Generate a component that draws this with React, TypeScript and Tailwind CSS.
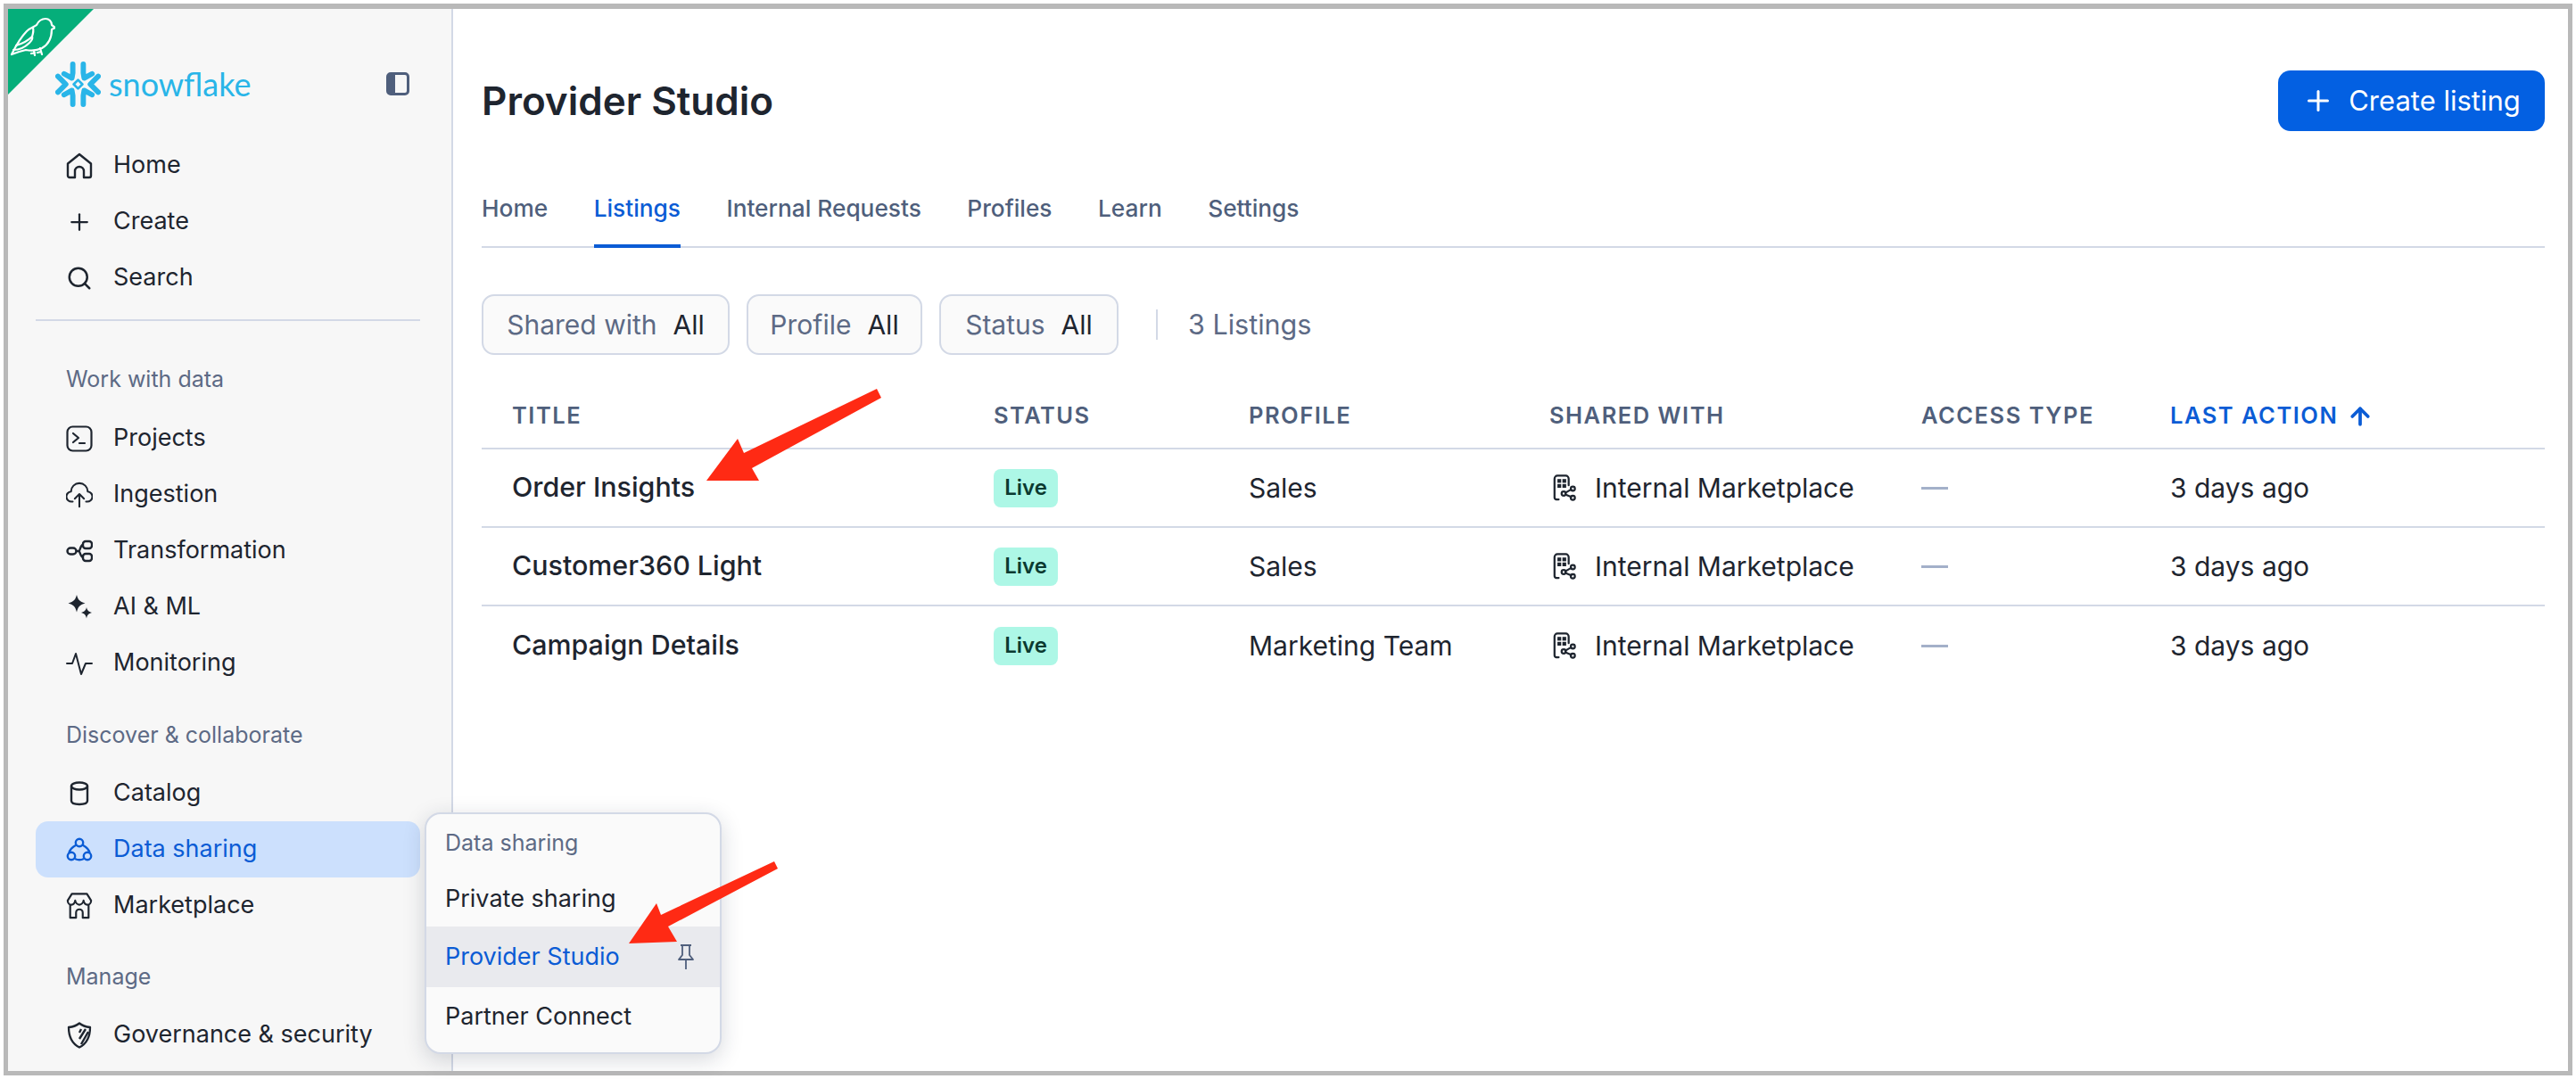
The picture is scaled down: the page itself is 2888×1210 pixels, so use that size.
import { Plus, Search, ArrowUp } from "lucide-react";
import type { ReactNode } from "react";

const HomeIcon = () => (
  <svg viewBox="0 0 30 30" className="w-[30px] h-[30px]" fill="none" stroke="currentColor" strokeWidth={2.4} strokeLinejoin="round">
    <path d="M2 12.500 15 2l13 10.500V26a2 2 0 0 1-2 2h-6v-7a5 5 0 0 0-10 0v7H4a2 2 0 0 1-2-2z" />
  </svg>
);
const TerminalIcon = () => (
  <svg viewBox="0 0 30 30" className="w-[30px] h-[30px]" fill="none" stroke="currentColor" strokeWidth={2.2} strokeLinecap="round" strokeLinejoin="round">
    <rect x="1.500" y="1.500" width="27" height="27" rx="6" />
    <path d="m8 9 6 5-6 5M15 20h6" />
  </svg>
);
const CloudIcon = () => (
  <svg viewBox="0 0 32 32" className="w-[32px] h-[32px]" fill="none" stroke="currentColor" strokeWidth={2.2} strokeLinecap="round" strokeLinejoin="round">
    <path d="M8 24H7a6 6 0 0 1-1-12 10 10 0 0 1 20 0 6 6 0 0 1-1 12h-1" />
    <path d="M16 30V15M10.500 20.500 16 15l5.500 5.500" />
  </svg>
);
const FlowIcon = () => (
  <svg viewBox="0 0 30 30" className="w-[30px] h-[30px]" fill="none" stroke="currentColor" strokeWidth={2.4}>
    <rect x="1.500" y="11.500" width="10" height="7" rx="3.500" />
    <rect x="19" y="4" width="10" height="8" rx="3" />
    <rect x="19" y="18" width="10" height="8" rx="3" />
    <path d="M11.500 15h2.500c2 0 2-7 5-7M14 15c2 0 2 7 5 7" />
  </svg>
);
const SparkIcon = () => (
  <svg viewBox="0 0 30 30" className="w-[30px] h-[30px]" fill="currentColor">
    <path d="M12 1c1.500 5.500 3 7.500 9.500 9.500-6.500 2-8 4-9.500 10-1.500-6-3-8-9.500-10C9 8.500 10.500 6.500 12 1z" />
    <path d="M23 15c.8 3.500 2 4.800 6 6-4 1.200-5.200 2.500-6 6.500-.8-4-2-5.300-6-6.500 4-1.200 5.200-2.500 6-6z" />
  </svg>
);
const PulseIcon = () => (
  <svg viewBox="0 0 30 30" className="w-[30px] h-[30px]" fill="none" stroke="currentColor" strokeWidth={2} strokeLinecap="round" strokeLinejoin="round">
    <path d="M1 15h6l4-11 6 23 5-12h7" />
  </svg>
);
const CylinderIcon = () => (
  <svg viewBox="0 0 30 30" className="w-[30px] h-[30px]" fill="none" stroke="currentColor" strokeWidth={2.4}>
    <ellipse cx="15" cy="6.500" rx="9" ry="4" />
    <path d="M6 6.500V23c0 2.500 4 4 9 4s9-1.500 9-4V6.500" />
  </svg>
);
const ShareCircleIcon = () => (
  <svg viewBox="0 0 30 30" className="w-[30px] h-[30px]" fill="none" stroke="currentColor" strokeWidth={2.4}>
    <circle cx="15" cy="7" r="4.200" />
    <circle cx="6" cy="22" r="4.200" />
    <circle cx="24" cy="22" r="4.200" />
    <path d="M11.500 9.500C7 12 4 14.500 3.500 18.500M18.500 9.500c4.500 2.500 7.500 5 8 9M10 25c3 1.600 7 1.600 10 0" />
  </svg>
);
const StoreIcon = () => (
  <svg viewBox="0 0 32 32" className="w-[32px] h-[32px]" fill="none" stroke="currentColor" strokeWidth={2.3} strokeLinejoin="round">
    <path d="M7 1.500h18l5 8c0 3-2 5-4.500 5S21.500 12 21 9.500c-.5 2.500-2.500 5-5 5s-4.500-2.500-5-5c-.5 2.500-2 5-4.500 5S2 12.500 2 9.500z" />
    <path d="M5 14.500V30h7v-6a4 4 0 0 1 8 0v6h7V14.500" />
  </svg>
);
const ShieldIcon = () => (
  <svg viewBox="0 0 30 30" className="w-[30px] h-[30px]" fill="none" stroke="currentColor" strokeWidth={2.3} strokeLinejoin="round">
    <path d="M15 1.500c3 2.500 7 4 12 4.500 0 10-3 18-12 22.500C6 24 3 16 3 6c5-.5 9-2 12-4.500z" />
    <path d="M17 8l-2 4M22 8l-7 11M25 11l-8 14" strokeWidth={2.4} />
  </svg>
);
const PinIcon = () => (
  <svg viewBox="0 0 24 30" className="w-[24px] h-[30px]" fill="none" stroke="currentColor" strokeWidth={1.800} strokeLinejoin="round">
    <path d="M6 2h12M8 2v11l-4 5h16l-4-5V2M12 18v11" />
  </svg>
);
const BuildingShareIcon = () => (
  <svg viewBox="0 0 30 32" className="w-[28px] h-[32px] shrink-0" fill="none" stroke="currentColor" strokeWidth={2.4} strokeLinecap="round">
    <path d="M8 30H5a2.500 2.500 0 0 1-2-2.500V5a3.500 3.500 0 0 1 3.500-3.500h10A3.500 3.500 0 0 1 20 5v8" />
    <rect x="6.500" y="5.500" width="4.500" height="4.500" fill="currentColor" stroke="none" />
    <rect x="12.500" y="5.500" width="4.500" height="4.500" fill="currentColor" stroke="none" />
    <rect x="6.500" y="11.500" width="4.500" height="4.500" fill="currentColor" stroke="none" />
    <rect x="12.500" y="11.500" width="4.500" height="4.500" fill="currentColor" stroke="none" />
    <circle cx="14" cy="23" r="2.500" />
    <circle cx="25" cy="17" r="2.500" />
    <circle cx="25" cy="28" r="2.500" />
    <path d="m16 22 7-4M16 24l7 3" />
  </svg>
);
const BirdIcon = () => (
  <svg viewBox="0 0 52 44" className="w-[52px] h-[44px]" fill="none" stroke="#fff" strokeWidth={2.200} strokeLinecap="round" strokeLinejoin="round">
    <path d="M3 42C7 34 12 24 20 16c4-4 9-5 11-7 2-4 6-7 10-7s7 3 7 7l4 3-4 2c0 9-4 17-11 21-6 3-12 3-18 2-5 1-11 3-16 5z" />
    <path d="M8 32c7-2 13-5 18-10 1-3 2-6 1-10M5 37c6 0 13-3 18-8 3-3 4-5 3-7" />
    <path d="M28 38l1 5M35 35l2 7M29 40l-4 1M36 39l-4 1" />
  </svg>
);
const SnowflakeLogo = () => (
  <svg viewBox="0 0 52 52" className="w-[51px] h-[51px]" fill="none" stroke="#29b5e8" strokeWidth={6} strokeLinecap="round" strokeLinejoin="round">
    <path d="M20 3v10l-1 6-9-5M32 3v10l1 6 9-5" />
    <path d="M20 49V39l-1-6-9 5M32 49V39l1-6 9 5" />
    <path d="M3 17l9 9-9 9M49 17l-9 9 9 9" />
    <path d="M26 21l5 5-5 5-5-5z" strokeWidth={2.800} />
  </svg>
);

const NavItem = ({ icon, label, active }: { icon: ReactNode; label: string; active?: boolean }) => (
  <div className={`h-[63px] flex items-center pl-[34px] rounded-[14px] text-[27px] ${active ? "bg-[#cce0fd] text-[#0b5cd5]" : "text-[#1e252f]"}`}>
    <span className="w-[30px] flex justify-center shrink-0">{icon}</span>
    <span className="ml-[23px]">{label}</span>
  </div>
);

const SectionLabel = ({ children, className }: { children: ReactNode; className: string }) => (
  <div className={`pl-[34px] h-[40px] flex items-center text-[25px] text-[#5d6a85] ${className}`}>{children}</div>
);

const Filter = ({ label, width }: { label: string; width: string }) => (
  <div className={`${width} h-[68px] flex items-center justify-center gap-[18px] rounded-[14px] border-2 border-[#d3d9e6] bg-[#fafafa] text-[30px]`}>
    <span className="text-[#5d6a85]">{label}</span>
    <span className="text-[#1e252f]">All</span>
  </div>
);

const cols = "grid grid-cols-[540px_286px_337px_417px_279px_1fr] pl-[34px] items-center";

const rows = [
  { title: "Order Insights", profile: "Sales" },
  { title: "Customer360 Light", profile: "Sales" },
  { title: "Campaign Details", profile: "Marketing Team" },
];

const tabs = ["Home", "Listings", "Internal Requests", "Profiles", "Learn", "Settings"];

export default function App() {
  return (
    <div className="relative w-[2888px] h-[1210px] bg-white p-[4px] overflow-hidden font-['Inter',sans-serif]">
      <div className="w-full h-full border-[5px] border-[#b9b9b9] border-t-[6px] flex overflow-hidden">
        <aside className="relative w-[499px] shrink-0 bg-[#f7f7f7] border-r-2 border-[#d3d9e6] pl-[31px] pr-[35px] overflow-hidden">
          <div className="absolute left-0 top-0 w-0 h-0 border-t-[96px] border-r-[96px] border-t-[#05ae7a] border-r-transparent" />
          <div className="absolute left-[1px] top-[9px]">
            <BirdIcon />
          </div>
          <div className="h-[144px] flex items-center pl-[22px] pr-[12px] pt-[24px]">
            <SnowflakeLogo />
            <span className="ml-[9px] text-[36px] leading-none text-[#29b5e8] font-['Lato',sans-serif]">snowflake</span>
            <div className="ml-auto w-[26px] h-[26px] rounded-[5px] border-[3px] border-[#4f5f7c] flex">
              <div className="w-[7px] bg-[#4f5f7c]" />
            </div>
          </div>
          <NavItem icon={<HomeIcon />} label="Home" />
          <NavItem icon={<Plus size={30} strokeWidth={1.8} />} label="Create" />
          <NavItem icon={<Search size={30} strokeWidth={2} />} label="Search" />
          <div className="mt-[15px] border-t-2 border-[#d3d9e6]" />
          <SectionLabel className="mt-[46px] mb-[14px]">Work with data</SectionLabel>
          <NavItem icon={<TerminalIcon />} label="Projects" />
          <NavItem icon={<CloudIcon />} label="Ingestion" />
          <NavItem icon={<FlowIcon />} label="Transformation" />
          <NavItem icon={<SparkIcon />} label="AI & ML" />
          <NavItem icon={<PulseIcon />} label="Monitoring" />
          <SectionLabel className="mt-[30px] mb-[13px]">Discover &amp; collaborate</SectionLabel>
          <NavItem icon={<CylinderIcon />} label="Catalog" />
          <NavItem active icon={<ShareCircleIcon />} label="Data sharing" />
          <NavItem icon={<StoreIcon />} label="Marketplace" />
          <SectionLabel className="mt-[29px] mb-[13px]">Manage</SectionLabel>
          <NavItem icon={<ShieldIcon />} label="Governance & security" />
        </aside>

        <main className="flex-1 pl-[32px] pr-[26px]">
          <div className="flex items-center justify-between pt-[69px]">
            <h1 className="text-[44px] font-semibold text-[#1e252f]">Provider Studio</h1>
            <button className="w-[299px] h-[68px] rounded-[14px] bg-[#0360e2] text-white text-[31px] flex items-center justify-center gap-[16px]">
              <Plus size={36} strokeWidth={2} />
              Create listing
            </button>
          </div>

          <div className="mt-[45px] h-[86px] flex gap-[51.5px] border-b-2 border-[#d3d9e6] text-[26.25px] font-medium text-[#4f5f7c]">
            {tabs.map((t) => (
              <div
                key={t}
                className={`h-[86px] flex items-center ${t === "Listings" ? "text-[#0b5cd5] border-b-[4px] border-[#0b5cd5] pt-[2px]" : "pb-[2px]"}`}
              >
                {t}
              </div>
            ))}
          </div>

          <div className="mt-[52px] flex items-center gap-[19px]">
            <Filter label="Shared with" width="w-[278px]" />
            <Filter label="Profile" width="w-[197px]" />
            <Filter label="Status" width="w-[201px]" />
            <div className="ml-[23px] w-[2px] h-[34px] bg-[#d3d9e6]" />
            <span className="ml-[15px] text-[30.5px] text-[#5d6a85]">3 Listings</span>
          </div>

          <div className="mt-[36px]">
            <div className={`${cols} h-[70px] pb-[3px] border-b-2 border-[#d3d9e6] text-[25.5px] font-semibold tracking-[1.5px] text-[#4f5f7c]`}>
              <div>TITLE</div>
              <div>STATUS</div>
              <div>PROFILE</div>
              <div>SHARED WITH</div>
              <div>ACCESS TYPE</div>
              <div className="flex items-center gap-[10px] text-[#0b5cd5]">
                LAST ACTION
                <ArrowUp size={30} strokeWidth={3} />
              </div>
            </div>
            {rows.map((r, i) => (
              <div key={r.title} className={`${cols} h-[88px] text-[30px] text-[#1e252f] ${i < 2 ? "border-b-2 border-[#d3d9e6]" : ""}`}>
                <div className="font-medium text-[30.4px]">{r.title}</div>
                <div className="flex">
                  <span className="flex items-center justify-center w-[72px] h-[43px] rounded-[8px] bg-[#adf7e6] text-[24px] font-semibold text-[#0b3a30]">Live</span>
                </div>
                <div>{r.profile}</div>
                <div className="flex items-center gap-[20px] pl-[3px]">
                  <BuildingShareIcon />
                  Internal Marketplace
                </div>
                <div>
                  <div className="w-[30px] h-[3px] bg-[#a3b0c9]" />
                </div>
                <div>3 days ago</div>
              </div>
            ))}
          </div>
        </main>
      </div>

      {/* popup menu over the sidebar */}
      <div className="absolute left-[476px] top-[911px] w-[333px] h-[271px] rounded-[18px] border-2 border-[#d3d9e6] bg-[#fafafa] shadow-[0_6px_24px_rgba(30,40,60,0.18)] overflow-hidden flex flex-col text-[27px]">
        <div className="h-[65px] shrink-0 flex items-center pl-[21px] text-[25px] text-[#5d6a85]">Data sharing</div>
        <div className="h-[61px] shrink-0 flex items-center pl-[21px] text-[#1e252f]">Private sharing</div>
        <div className="h-[68px] shrink-0 flex items-center justify-between pl-[21px] pr-[26px] bg-[#e9eaee] text-[#0b5cd5]">
          Provider Studio
          <span className="text-[#4f5f7c]">
            <PinIcon />
          </span>
        </div>
        <div className="h-[67px] shrink-0 flex items-center pl-[21px] text-[#1e252f]">Partner Connect</div>
      </div>

      {/* red annotation arrows */}
      <svg className="absolute left-0 top-0 pointer-events-none" width="2888" height="1210" viewBox="0 0 2888 1210">
        <path d="M988 446 983 436 834 508 827 492 792 539 851 539 843 525Z" fill="#ff2a14" />
        <path d="M872 974 868 966 741 1026 736 1013 705 1058 759 1056 749 1039Z" fill="#ff2a14" />
      </svg>
    </div>
  );
}
